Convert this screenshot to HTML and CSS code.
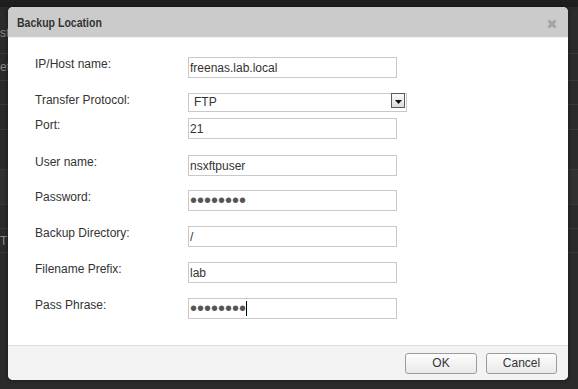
FILE: index.html
```html
<!DOCTYPE html>
<html>
<head>
<meta charset="utf-8">
<link rel="stylesheet" href="styles.css">
</head>
<body>
<div class="page">
  <div class="topbar"></div>
  <div class="bg-row r1"><span class="bg-text">st</span></div>
  <div class="bg-row r2"><span class="bg-text">et</span></div>
  <div class="bg-row r3"></div>
  <div class="bg-row r4"></div>
  <div class="bg-row r5"></div>
  <div class="bg-row r6 band"></div>
  <div class="bg-row r7"></div>
  <div class="bg-row r8"><span class="bg-text">T</span></div>
  <div class="bg-row r9"></div>
</div>

<div class="dialog">
  <div class="dlg-header">
    <span class="dlg-title">Backup Location</span>
    <svg class="dlg-close" width="10" height="10" viewBox="0 0 10 10"><path d="M1.5 1.5 L8.5 8.5 M8.5 1.5 L1.5 8.5" stroke="#a3a3a3" stroke-width="2.6" stroke-linecap="butt"/></svg>
  </div>
  <div class="dlg-body">
    <div class="row">
      <label class="lbl">IP/Host name:</label>
      <input class="field" type="text" value="freenas.lab.local">
    </div>
    <div class="row tight">
      <label class="lbl">Transfer Protocol:</label>
      <div class="select">
        <span class="select-text">FTP</span>
        <span class="select-btn"><svg width="7" height="4" viewBox="0 0 7 4"><path d="M0 0 H7 L3.5 4 Z" fill="#111"/></svg></span>
      </div>
    </div>
    <div class="row wide">
      <label class="lbl">Port:</label>
      <input class="field" type="text" value="21">
    </div>
    <div class="row narrow">
      <label class="lbl">User name:</label>
      <input class="field" type="text" value="nsxftpuser">
    </div>
    <div class="row">
      <label class="lbl">Password:</label>
      <div class="field pw"><span class="dots">&#8226;&#8226;&#8226;&#8226;&#8226;&#8226;&#8226;&#8226;</span></div>
    </div>
    <div class="row">
      <label class="lbl">Backup Directory:</label>
      <input class="field" type="text" value="/">
    </div>
    <div class="row">
      <label class="lbl">Filename Prefix:</label>
      <input class="field" type="text" value="lab">
    </div>
    <div class="row">
      <label class="lbl">Pass Phrase:</label>
      <div class="field pw"><span class="dots">&#8226;&#8226;&#8226;&#8226;&#8226;&#8226;&#8226;&#8226;</span><span class="caret"></span></div>
    </div>
  </div>
  <div class="dlg-footer">
    <button class="btn btn-ok">OK</button>
    <button class="btn btn-cancel">Cancel</button>
  </div>
</div>
</body>
</html>
```

FILE: styles.css
```css
html, body {
  margin: 0;
  padding: 0;
}
body {
  width: 578px;
  height: 389px;
  overflow: hidden;
  background: #2b2b2b;
  font-family: "Liberation Sans", Arial, sans-serif;
  font-size: 12px;
  color: #333;
  position: relative;
}

/* background page */
.page {
  display: flex;
  flex-direction: column;
}
.topbar {
  height: 7px;
  background: #1f1f1f;
}
.bg-row {
  border-bottom: 1px solid #3a3a3a;
  color: #8a8a8a;
  font-size: 12px;
  display: flex;
  align-items: center;
  overflow: hidden;
  box-sizing: border-box;
}
.bg-text {
  margin-left: 0;
}
.r1 { height: 47px; padding-top: 5px; }
.r2 { height: 27px; }
.r3 { height: 24px; }
.r4 { height: 25px; }
.r5 { height: 40px; }
.r6 { height: 35px; }
.r7 { height: 24px; }
.r8 { height: 24px; }
.r9 { height: 136px; border-bottom: none; }
.band {
  background: #313131;
}

/* dialog */
.dialog {
  position: absolute;
  left: 8px;
  top: 7px;
  width: 560px;
  height: 373px;
  background: #fff;
  border-radius: 5px;
  overflow: hidden;
  display: flex;
  flex-direction: column;
  box-shadow: 0 0 4px rgba(0,0,0,0.5);
}
.dlg-header {
  height: 30px;
  background: #cbcbcb;
  border-bottom: 1px solid #f0f0f0;
  display: flex;
  align-items: center;
  justify-content: space-between;
  padding: 0 11px 0 9px;
  flex-shrink: 0;
}
.dlg-title {
  display: inline-block;
  font-weight: bold;
  font-size: 13px;
  color: #333;
  margin-top: 1px;
  transform: scaleX(0.81);
  transform-origin: left center;
}
.dlg-close {
  display: block;
  margin-top: 4px;
}

.dlg-body {
  flex: 1;
  padding: 19px 0 0 27px;
}
.row {
  display: flex;
  align-items: flex-start;
  margin-bottom: 15px;
}
.row.tight { margin-bottom: 6px; }
.row.wide { margin-bottom: 16px; }
.row.narrow { margin-bottom: 14px; }
.lbl {
  width: 153px;
  line-height: 14px;
  color: #333;
}
.field {
  box-sizing: border-box;
  width: 209px;
  height: 21px;
  border: 1px solid #c9c9c9;
  padding: 0 1px;
  margin: 0;
  font-family: "Liberation Sans", Arial, sans-serif;
  font-size: 12px;
  color: #333;
  background: #fff;
  outline: none;
}
.field.pw {
  display: flex;
  align-items: center;
}
.dots {
  font-size: 20px;
  line-height: 19px;
  color: #555;
  letter-spacing: 0;
  height: 19px;
  margin-top: -1px;
}
.caret {
  display: inline-block;
  width: 1px;
  height: 15px;
  background: #000;
}

.select {
  box-sizing: border-box;
  width: 219px;
  height: 19px;
  border: 1px solid #c9c9c9;
  display: flex;
  align-items: flex-start;
  background: #fff;
}
.select-text {
  flex: 1;
  padding-left: 5px;
  line-height: 17px;
}
.select-btn {
  box-sizing: border-box;
  width: 14px;
  height: 15px;
  margin-right: 1px;
  margin-top: -1px;
  border: 1px solid #5a5a5a;
  background: linear-gradient(#fafafa, #dcdcdc);
  display: flex;
  align-items: center;
  justify-content: center;
}
.select-btn svg {
  display: block;
  margin-top: 2px;
}

.dlg-footer {
  height: 35px;
  box-sizing: border-box;
  border-top: 1px solid #dcdcdc;
  background: #f3f3f3;
  display: flex;
  align-items: center;
  justify-content: flex-end;
  gap: 9px;
  padding-right: 11px;
  flex-shrink: 0;
}
.btn {
  box-sizing: border-box;
  height: 21px;
  border: 1px solid #9c9c9c;
  border-radius: 3px;
  background: linear-gradient(#fdfdfd, #e9e9e9);
  font-family: "Liberation Sans", Arial, sans-serif;
  font-size: 12px;
  color: #333;
  padding: 0;
}
.btn-ok { width: 72px; }
.btn-cancel { width: 71px; }
```
